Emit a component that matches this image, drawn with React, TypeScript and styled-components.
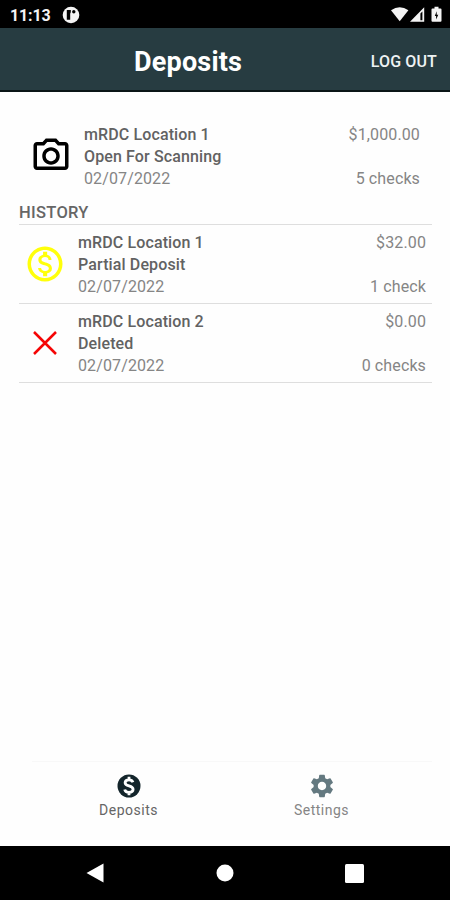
import React from "react";
import styled, { createGlobalStyle } from "styled-components";
import { MdOutlineMonetizationOn, MdOutlinePhotoCamera, MdSettings } from "react-icons/md";

const GlobalStyle = createGlobalStyle`
  *, *::before, *::after { box-sizing: border-box; }
  body { margin: 0; background: #fefefe; font-family: Roboto, sans-serif; }
  svg { display: block; flex: none; }
`;

const Screen = styled.div`
  width: 450px;
  height: 900px;
  display: flex;
  flex-direction: column;
  background: #fefefe;
  overflow: hidden;
`;

const StatusBar = styled.div`
  height: 28px;
  flex: none;
  display: flex;
  align-items: center;
  padding: 2px 7px 0 10px;
  background: #000;
  color: #f4f4f4;
`;

const Clock = styled.span`
  width: 52px;
  padding-top: 1px;
  font-size: 16px;
  line-height: 20px;
  font-weight: 700;
  letter-spacing: -0.15px;
`;

const StatusIcons = styled.div`
  margin-left: auto;
  display: flex;
  align-items: center;
`;

const Header = styled.header`
  height: 64px;
  flex: none;
  display: flex;
  justify-content: space-between;
  align-items: center;
  padding: 5px 13px 0 134px;
  background: #273c41;
  border-bottom: 2px solid #0b1517;
  color: #fff;
`;

const Title = styled.h1`
  margin: 0;
  font-size: 27px;
  line-height: 34px;
  font-weight: 700;
  letter-spacing: 0.2px;
  white-space: nowrap;
`;

const LogOut = styled.button`
  padding: 0;
  border: 0;
  background: none;
  color: #eef2f3;
  font: 500 16px/20px Roboto, sans-serif;
  letter-spacing: 0.15px;
  white-space: nowrap;
`;

const Content = styled.main`
  flex: 1;
  padding: 31px 18px 0 19px;
`;

const Row = styled.div<{ $open?: boolean }>`
  height: 79px;
  display: grid;
  grid-template-columns: ${(p) => (p.$open ? "65px" : "59px")} 1fr auto;
  padding: ${(p) => (p.$open ? "1px 12px 0 0" : "7px 6px 0 0")};
  border-bottom: ${(p) => (p.$open ? "none" : "1px solid #dedede")};
`;

const IconCell = styled.div<{ $open?: boolean }>`
  height: 64px;
  display: flex;
  align-items: center;
  padding-left: ${(p) => (p.$open ? 11 : 5)}px;
`;

const Lines = styled.div<{ $end?: boolean }>`
  display: flex;
  flex-direction: column;
  justify-content: space-between;
  align-items: ${(p) => (p.$end ? "flex-end" : "flex-start")};
  height: 66px;
`;

const Text = styled.span<{ $strong?: boolean }>`
  font-size: 16px;
  line-height: 22px;
  letter-spacing: 0.12px;
  font-weight: ${(p) => (p.$strong ? 500 : 400)};
  color: ${(p) => (p.$strong ? "#626262" : "#858585")};
  white-space: nowrap;
`;

const SectionTitle = styled.h2`
  margin: 0;
  height: 23px;
  font-size: 16.5px;
  line-height: 22px;
  font-weight: 500;
  letter-spacing: 0.3px;
  color: #666;
  border-bottom: 1px solid #dedede;
`;

const Tabs = styled.nav`
  height: 85px;
  flex: none;
  margin: 0 18px 0 32px;
  display: grid;
  grid-template-columns: 193px 193px;
  border-top: 1px solid #f8f8f8;
`;

const Tab = styled.div<{ $active?: boolean }>`
  display: flex;
  flex-direction: column;
  align-items: center;
  padding-top: 10px;
  color: ${(p) => (p.$active ? "#13252b" : "#647980")};
`;

const TabLabel = styled.span<{ $active?: boolean }>`
  margin-top: 1px;
  font-size: 14px;
  line-height: 18px;
  letter-spacing: 0.5px;
  color: ${(p) => (p.$active ? "#656565" : "#858585")};
`;

const NavBar = styled.div`
  height: 54px;
  flex: none;
  display: grid;
  grid-template-columns: 159px 102px 157px;
  padding-left: 15px;
  align-items: center;
  justify-items: center;
  background: #000;
`;

type Deposit = {
  icon: React.ReactNode;
  location: string;
  status: string;
  date: string;
  amount: string;
  checks: string;
};

const DeletedIcon = () => (
  <svg width="42" height="42" viewBox="0 0 42 42" fill="none" stroke="#f50505" strokeWidth="2.5">
    <path d="M10 10 32 32M32 10 10 32" />
  </svg>
);

const DepositsIcon = () => (
  <svg width="28" height="28" viewBox="0 0 28 28" fill="none">
    <circle cx="14" cy="14" r="11.5" fill="currentColor" />
    <path
      d="M18 10.3C17.4 8.6 16 7.8 14 7.8c-2.3 0-3.9 1.1-3.9 2.9 0 4.3 8 2.1 8 6.6 0 1.9-1.7 3-4.1 3-2.3 0-3.9-1-4.3-2.8M14 4.7v3M14 20.3v3"
      stroke="#fff"
      strokeWidth="2.8"
    />
  </svg>
);

const openDeposit: Deposit = {
  icon: <MdOutlinePhotoCamera size={42} color="#000" />,
  location: "mRDC Location 1",
  status: "Open For Scanning",
  date: "02/07/2022",
  amount: "$1,000.00",
  checks: "5 checks",
};

const history: Deposit[] = [
  {
    icon: <MdOutlineMonetizationOn size={42} color="#ffff0a" />,
    location: "mRDC Location 1",
    status: "Partial Deposit",
    date: "02/07/2022",
    amount: "$32.00",
    checks: "1 check",
  },
  {
    icon: <DeletedIcon />,
    location: "mRDC Location 2",
    status: "Deleted",
    date: "02/07/2022",
    amount: "$0.00",
    checks: "0 checks",
  },
];

const DepositRow = ({ deposit, open }: { deposit: Deposit; open?: boolean }) => (
  <Row $open={open}>
    <IconCell $open={open}>{deposit.icon}</IconCell>
    <Lines>
      <Text $strong>{deposit.location}</Text>
      <Text $strong>{deposit.status}</Text>
      <Text>{deposit.date}</Text>
    </Lines>
    <Lines $end>
      <Text>{deposit.amount}</Text>
      <Text>{deposit.checks}</Text>
    </Lines>
  </Row>
);

export default function App() {
  return (
    <>
      <GlobalStyle />
      <Screen>
        <StatusBar>
          <Clock>11:13</Clock>
          <svg width="18" height="18" viewBox="0 0 18 18">
            <circle cx="9" cy="9" r="8.3" fill="#f4f4f4" />
            <path d="M4.8 4h4v2.2a3 3 0 0 0-.6 2V13.8H4.8Z" fill="#000" />
            <circle cx="11.8" cy="5.8" r="1.7" fill="#000" />
          </svg>
          <StatusIcons>
            <svg width="52" height="18" viewBox="0 0 52 18" fill="#f4f4f4">
              <path d="M0 4.3Q8.7-1.8 17.4 4.3L8.7 15.3Z" />
              <path fillRule="evenodd" d="M19 15.8 33.2 1.3v14.5ZM29.4 7.5v6.8h2V5.5Z" />
              <path fillRule="evenodd" d="M43.5.8h4v1.7h2a1 1 0 0 1 1 1v11.3a1 1 0 0 1-1 1h-8a1 1 0 0 1-1-1V3.5a1 1 0 0 1 1-1h2ZM45.7 5.3 43.8 10h1.3v3.4L47.3 8.7h-1.6Z" />
            </svg>
          </StatusIcons>
        </StatusBar>
        <Header>
          <Title>Deposits</Title>
          <LogOut>LOG OUT</LogOut>
        </Header>
        <Content>
          <DepositRow deposit={openDeposit} open />
          <SectionTitle>HISTORY</SectionTitle>
          {history.map((deposit) => (
            <DepositRow key={deposit.location} deposit={deposit} />
          ))}
        </Content>
        <Tabs>
          <Tab $active>
            <DepositsIcon />
            <TabLabel $active>Deposits</TabLabel>
          </Tab>
          <Tab>
            <MdSettings size={28} />
            <TabLabel>Settings</TabLabel>
          </Tab>
        </Tabs>
        <NavBar>
          <svg width="18" height="20" viewBox="0 0 18 20" fill="#fff">
            <path d="M17.5.5v19L.5 10Z" />
          </svg>
          <svg width="18" height="18" viewBox="0 0 18 18" fill="#fff">
            <circle cx="9" cy="9" r="8.5" />
          </svg>
          <svg width="19" height="19" viewBox="0 0 19 19" fill="#fff">
            <rect width="19" height="19" rx="1.5" />
          </svg>
        </NavBar>
      </Screen>
    </>
  );
}
